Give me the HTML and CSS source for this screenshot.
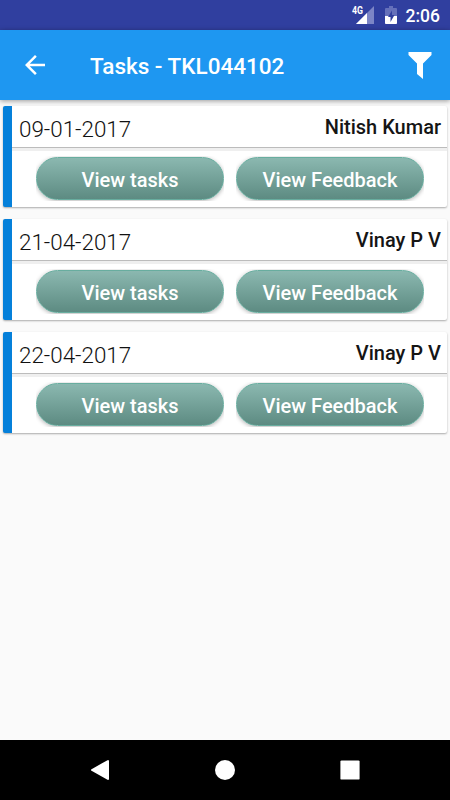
FILE: index.html
```
<!DOCTYPE html>
<html lang="en">
<head>
  <meta charset="UTF-8">
  <title>Tasks - TKL044102</title>
  <link rel="stylesheet" href="styles.css">
</head>
<body>
  <div class="status-bar">
    <svg class="signal" width="24" height="20" viewBox="0 0 24 20">
      <path d="M23 1V19H5Z" fill="#7c85c6"/>
      <path d="M16 8V19H5Z" fill="#fff"/>
      <rect x="0" y="0" width="13" height="10" fill="#303f9f"/>
      <text class="network" x="1" y="9" textLength="11" lengthAdjust="spacingAndGlyphs">4G</text>
    </svg>
    <svg class="battery" width="12" height="18" viewBox="0 0 12 18">
      <path d="M4 0H8V2H11Q12 2 12 3V17Q12 18 11 18H1Q0 18 0 17V3Q0 2 1 2H4Z" fill="#6570ba"/>
      <path d="M0 10H12V17Q12 18 11 18H1Q0 18 0 17Z" fill="#fff"/>
      <path d="M7 4.5V9H9.5L5.5 16V11H3Z" fill="#303f9f"/>
    </svg>
    <span class="clock">2:06</span>
  </div>

  <div class="toolbar">
    <svg class="back" width="30" height="30" viewBox="0 0 24 24">
      <path d="M20 11H7.83l5.59-5.59L12 4l-8 8 8 8 1.41-1.41L7.83 13H20v-2z" fill="#fff"/>
    </svg>
    <h1>Tasks - TKL044102</h1>
    <svg class="filter" width="24" height="27" viewBox="0 0 24 27">
      <path d="M0.5 0H23.5V3L15 11.5V27L9 22V11.5L0.5 3Z" fill="#fff"/>
    </svg>
  </div>

  <div class="list">
    <div class="card">
      <div class="card-head">
        <span class="date">09-01-2017</span>
        <span class="name">Nitish Kumar</span>
      </div>
      <div class="actions">
        <div class="btn-wrap"><button>View tasks</button></div>
        <div class="btn-wrap"><button>View Feedback</button></div>
      </div>
    </div>

    <div class="card">
      <div class="card-head">
        <span class="date">21-04-2017</span>
        <span class="name">Vinay P V</span>
      </div>
      <div class="actions">
        <div class="btn-wrap"><button>View tasks</button></div>
        <div class="btn-wrap"><button>View Feedback</button></div>
      </div>
    </div>

    <div class="card">
      <div class="card-head">
        <span class="date">22-04-2017</span>
        <span class="name">Vinay P V</span>
      </div>
      <div class="actions">
        <div class="btn-wrap"><button>View tasks</button></div>
        <div class="btn-wrap"><button>View Feedback</button></div>
      </div>
    </div>
  </div>

  <div class="nav-bar">
    <svg width="20" height="22" viewBox="0 0 20 22">
      <path d="M18 2V20L2 11Z" fill="#fff" stroke="#fff" stroke-width="2" stroke-linejoin="round"/>
    </svg>
    <svg width="20" height="20" viewBox="0 0 20 20">
      <circle cx="10" cy="10" r="10" fill="#fff"/>
    </svg>
    <svg width="20" height="20" viewBox="0 0 20 20">
      <rect x="0.4" y="0.4" width="19.2" height="19.2" rx="1.2" fill="#fff"/>
    </svg>
  </div>
</body>
</html>
```
FILE: styles.css
```
* {
  box-sizing: border-box;
}
body {
  font-family: Roboto, sans-serif;
  background: #fafafa;
  margin: 0;
  height: 800px;
  display: flex;
  flex-direction: column;
  overflow: hidden;
}
.status-bar {
  height: 30px;
  background: #303f9f;
  display: flex;
  justify-content: flex-end;
  align-items: flex-start;
  padding: 6px 10px 0 0;
}
.signal {
  margin: -1px 10px 0 0;
}
.network {
  font-size: 10px;
  font-weight: 700;
  fill: #fff;
}
.battery {
  margin-right: 9px;
}
.clock {
  color: #fff;
  font-size: 17.5px;
  font-weight: 500;
  line-height: 20px;
}
.toolbar {
  height: 70px;
  background: #1e97f1;
  display: flex;
  align-items: center;
  padding: 0 18px 0 20px;
  box-shadow: 0 1px 5px rgba(0,0,0,0.4);
}
.toolbar h1 {
  color: #fff;
  font-size: 22.5px;
  font-weight: 500;
  line-height: 26px;
  margin: 2px 0 0 40px;
}
.filter {
  margin-left: auto;
}
.list {
  flex: 1;
  padding: 6px 3px 0;
}
.card {
  height: 101px;
  margin-bottom: 12px;
  background: #fff;
  border-left: 9px solid #0580da;
  border-radius: 2px;
  box-shadow: 0 1px 2px rgba(0,0,0,0.32);
}
.card-head {
  height: 45px;
  display: flex;
  justify-content: space-between;
  padding: 0 6px 0 7px;
  border-bottom: 3px solid #efefef;
  background: linear-gradient(#bcbcbc, #bcbcbc) bottom / 100% 1px no-repeat;
}
.date {
  color: #111;
  font-size: 22.4px;
  font-weight: 300;
  line-height: 26px;
  margin-top: 10px;
}
.name {
  color: #151515;
  font-size: 20px;
  font-weight: 500;
  line-height: 24px;
  margin-top: 9px;
}
.actions {
  display: flex;
  gap: 12px;
  padding: 5px 0 0 24px;
}
.btn-wrap {
  width: 188px;
  height: 45px;
  padding-top: 1px;
  overflow: hidden;
}
button {
  display: block;
  width: 188px;
  height: 43px;
  padding: 2px 0 0;
  border: 1px solid #68ad9f;
  border-radius: 22px;
  background: linear-gradient(#8bb8b0, #5d8b82);
  box-shadow: 0 1px 4px rgba(0,0,0,0.3);
  color: #fff;
  font-family: Roboto, sans-serif;
  font-size: 20px;
  font-weight: 500;
}
.nav-bar {
  height: 60px;
  background: #000;
  display: flex;
  align-items: center;
  justify-content: space-between;
  padding: 0 90px;
}
```
